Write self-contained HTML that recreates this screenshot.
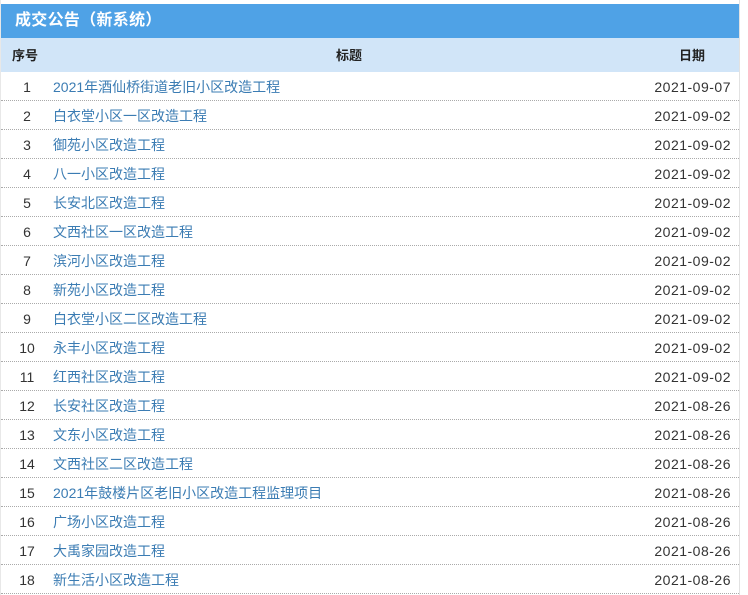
<!DOCTYPE html>
<html><head><meta charset="utf-8"><style>
body{margin:0;background:#fff;width:748px;height:595px;overflow:hidden;font-family:"Liberation Sans","Noto Sans CJK SC",sans-serif;}
.wrap{position:absolute;left:0;top:0;width:738px;border-right:1px solid #e2e2e2;border-left:1px solid #e8e8e8;height:595px;}
.bar{position:absolute;top:4px;left:0;width:738px;height:34px;background:#4fa2e6;color:#fff;font-weight:bold;font-size:16px;line-height:34px;padding-left:14px;box-sizing:border-box;letter-spacing:0.3px;}
.hd{position:absolute;top:38px;left:0;width:738px;height:34px;background:#d1e5f8;font-weight:bold;font-size:13px;color:#222;line-height:35px;}
.row{position:absolute;left:0;width:738px;height:29px;line-height:30px;font-size:14px;border-bottom:1px dotted #aaa;box-sizing:border-box;}
.n{position:absolute;left:0;width:52px;text-align:center;color:#333;}
.t{position:absolute;left:52px;color:#3b7cb3;}
.d{position:absolute;right:8px;color:#333;letter-spacing:0.5px;}
</style></head><body><div class="wrap">
<div class="bar">成交公告（新系统）</div>
<div class="hd"><span style="position:absolute;left:11px">序号</span><span style="position:absolute;left:335px">标题</span><span style="position:absolute;right:34px">日期</span></div>
<div class="row" style="top:72px"><span class="n">1</span><span class="t">2021年酒仙桥街道老旧小区改造工程</span><span class="d">2021-09-07</span></div>
<div class="row" style="top:101px"><span class="n">2</span><span class="t">白衣堂小区一区改造工程</span><span class="d">2021-09-02</span></div>
<div class="row" style="top:130px"><span class="n">3</span><span class="t">御苑小区改造工程</span><span class="d">2021-09-02</span></div>
<div class="row" style="top:159px"><span class="n">4</span><span class="t">八一小区改造工程</span><span class="d">2021-09-02</span></div>
<div class="row" style="top:188px"><span class="n">5</span><span class="t">长安北区改造工程</span><span class="d">2021-09-02</span></div>
<div class="row" style="top:217px"><span class="n">6</span><span class="t">文西社区一区改造工程</span><span class="d">2021-09-02</span></div>
<div class="row" style="top:246px"><span class="n">7</span><span class="t">滨河小区改造工程</span><span class="d">2021-09-02</span></div>
<div class="row" style="top:275px"><span class="n">8</span><span class="t">新苑小区改造工程</span><span class="d">2021-09-02</span></div>
<div class="row" style="top:304px"><span class="n">9</span><span class="t">白衣堂小区二区改造工程</span><span class="d">2021-09-02</span></div>
<div class="row" style="top:333px"><span class="n">10</span><span class="t">永丰小区改造工程</span><span class="d">2021-09-02</span></div>
<div class="row" style="top:362px"><span class="n">11</span><span class="t">红西社区改造工程</span><span class="d">2021-09-02</span></div>
<div class="row" style="top:391px"><span class="n">12</span><span class="t">长安社区改造工程</span><span class="d">2021-08-26</span></div>
<div class="row" style="top:420px"><span class="n">13</span><span class="t">文东小区改造工程</span><span class="d">2021-08-26</span></div>
<div class="row" style="top:449px"><span class="n">14</span><span class="t">文西社区二区改造工程</span><span class="d">2021-08-26</span></div>
<div class="row" style="top:478px"><span class="n">15</span><span class="t">2021年鼓楼片区老旧小区改造工程监理项目</span><span class="d">2021-08-26</span></div>
<div class="row" style="top:507px"><span class="n">16</span><span class="t">广场小区改造工程</span><span class="d">2021-08-26</span></div>
<div class="row" style="top:536px"><span class="n">17</span><span class="t">大禹家园改造工程</span><span class="d">2021-08-26</span></div>
<div class="row" style="top:565px"><span class="n">18</span><span class="t">新生活小区改造工程</span><span class="d">2021-08-26</span></div>
</div></body></html>
